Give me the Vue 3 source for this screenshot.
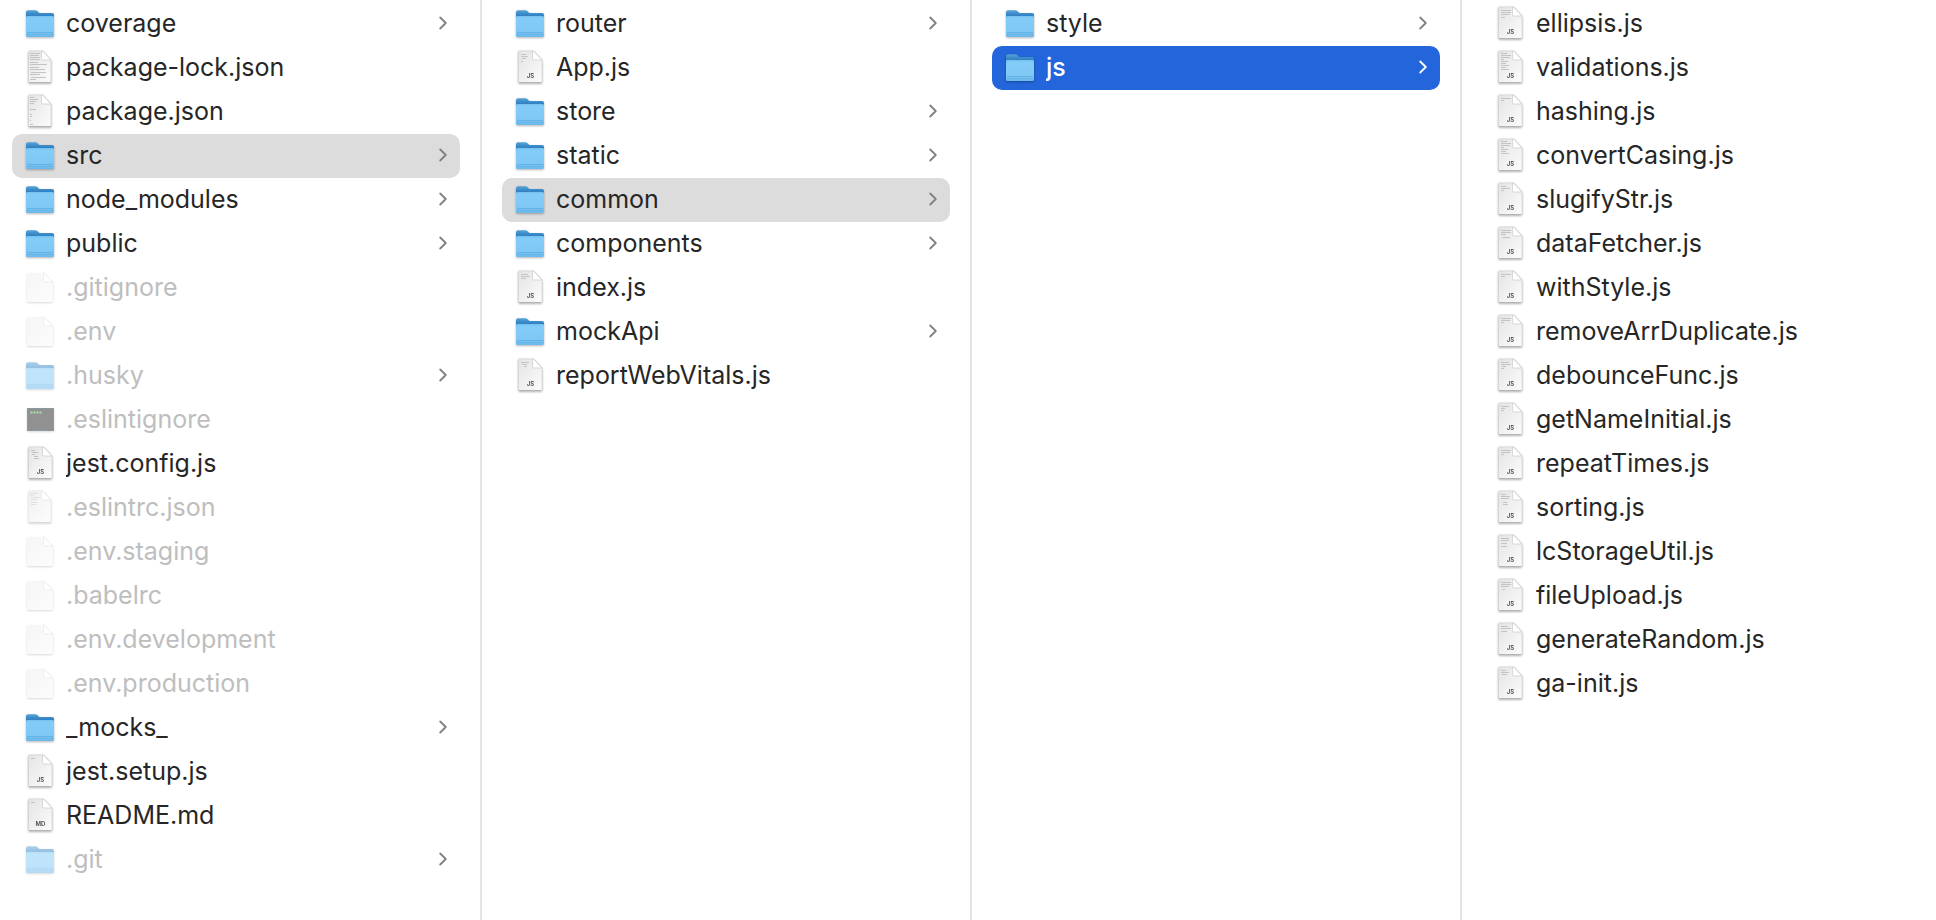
<script setup>
import { reactive } from 'vue'

const folder = (name, extra = {}) => ({ name, kind: 'folder', ...extra })
// lines: rows of preview text as [x, y, width]
const script = (name, lines = [], extra = {}) => ({ name, kind: 'doc', tag: 'JS', lines, ...extra })

const short = [[5, 4, 8], [5, 6, 4], [5, 8, 3]]
const wide = [[5, 4, 10], [5, 6, 9], [5, 8, 3]]
const dense = [[5, 3, 6], [5, 5, 10], [5, 7, 9], [5, 9, 3], [5, 11, 7], [5, 13, 5], [5, 15, 8]]
const tiny = [[5, 4, 4]]

const columns = reactive([
  {
    title: 'Project',
    selected: 'src',
    items: [
      folder('coverage'),
      {
        name: 'package-lock.json', kind: 'doc', narrow: true,
        lines: [[4, 3, 10], [4, 5, 9], [4, 7, 10], [4, 9, 10], [4, 12, 8], [4, 14, 17], [4, 17, 9], [4, 19, 15], [5, 22, 15], [4, 24, 10], [5, 27, 15], [4, 29, 6]]
      },
      {
        name: 'package.json', kind: 'doc', narrow: true,
        lines: [[4, 3, 4], [4, 5, 8], [4, 7, 6], [4, 9, 4], [4, 15, 6], [4, 20, 2], [4, 22, 2], [4, 26, 1], [4, 30, 3]]
      },
      folder('src'),
      folder('node_modules'),
      folder('public'),
      { name: '.gitignore', kind: 'blank', dim: true },
      { name: '.env', kind: 'blank', dim: true },
      folder('.husky', { dim: true }),
      { name: '.eslintignore', kind: 'terminal', dim: true },
      script('jest.config.js', [[5, 4, 4], [6, 6, 6], [6, 8, 3], [8, 10, 4], [8, 12, 5]]),
      {
        name: '.eslintrc.json', kind: 'doc', narrow: true, dim: true,
        lines: [[4, 3, 8], [4, 5, 3], [5, 7, 8], [5, 9, 6], [4, 12, 7], [5, 14, 5]]
      },
      { name: '.env.staging', kind: 'blank', dim: true },
      { name: '.babelrc', kind: 'blank', dim: true },
      { name: '.env.development', kind: 'blank', dim: true },
      { name: '.env.production', kind: 'blank', dim: true },
      folder('_mocks_'),
      script('jest.setup.js', tiny),
      { name: 'README.md', kind: 'doc', tag: 'MD', lines: tiny },
      folder('.git', { dim: true })
    ]
  },
  {
    title: 'src',
    selected: 'common',
    items: [
      folder('router'),
      script('App.js', [[5, 4, 5], [5, 6, 7], [6, 8, 4], [5, 11, 2]]),
      folder('store'),
      folder('static'),
      folder('common'),
      folder('components'),
      script('index.js', [[5, 4, 7], [5, 6, 9], [5, 8, 5]]),
      folder('mockApi'),
      script('reportWebVitals.js', [[5, 4, 8], [6, 6, 5], [8, 8, 3]])
    ]
  },
  {
    title: 'common',
    selected: 'js',
    active: true,
    items: [folder('style'), folder('js')]
  },
  {
    title: 'js',
    selected: '',
    items: [
      script('ellipsis.js', [[5, 4, 10], [5, 6, 10], [5, 8, 9], [5, 11, 4]]),
      script('validations.js', [...dense, [5, 17, 5], [5, 19, 8]]),
      script('hashing.js', [[5, 4, 10], [5, 6, 3]]),
      script('convertCasing.js', dense),
      script('slugifyStr.js', [[5, 4, 5], [5, 6, 9], [5, 8, 3]]),
      script('dataFetcher.js', [[5, 4, 10], [5, 6, 10], [5, 8, 5], [6, 11, 8]]),
      script('withStyle.js', [[5, 4, 10], [5, 6, 4]]),
      script('removeArrDuplicate.js', wide),
      script('debounceFunc.js', [[5, 4, 8], [5, 6, 10], [6, 8, 4], [5, 10, 3]]),
      script('getNameInitial.js', short),
      script('repeatTimes.js', wide),
      script('sorting.js', [[5, 4, 5], [5, 6, 9], [5, 8, 8], [7, 12, 4], [7, 14, 5]]),
      script('lcStorageUtil.js', [[5, 4, 8], [5, 6, 8], [5, 9, 6], [5, 12, 6]]),
      script('fileUpload.js', [[5, 4, 10], [5, 6, 10], [5, 8, 8], [6, 11, 3]]),
      script('generateRandom.js', [[5, 4, 7], [5, 6, 10], [5, 9, 6]]),
      script('ga-init.js', [[5, 4, 5], [5, 6, 8], [6, 8, 5]])
    ]
  }
])
</script>

<template>
  <svg class="defs" aria-hidden="true">
    <defs>
      <linearGradient id="folder-back" x1="0" y1="0" x2="0" y2="1">
        <stop offset="0" stop-color="#58a4d9" />
        <stop offset="0.3" stop-color="#4090cc" />
        <stop offset="0.6" stop-color="#2f7fc2" />
      </linearGradient>
      <linearGradient id="folder-front" x1="0" y1="0" x2="0" y2="1">
        <stop offset="0" stop-color="#72c1f0" />
        <stop offset="0.12" stop-color="#84ccf8" />
        <stop offset="0.72" stop-color="#7fc8f5" />
        <stop offset="1" stop-color="#6ab8ea" />
      </linearGradient>
      <linearGradient id="paper" x1="0" y1="0" x2="1" y2="1">
        <stop offset="0" stop-color="#e4e4e4" />
        <stop offset="1" stop-color="#fcfcfc" />
      </linearGradient>
      <linearGradient id="blank-paper" x1="0" y1="0" x2="1" y2="1">
        <stop offset="0" stop-color="#ededed" />
        <stop offset="1" stop-color="#fbfbfb" />
      </linearGradient>
    </defs>
  </svg>

  <main class="browser">
    <ul v-for="col in columns" :key="col.title" class="column" :aria-label="col.title">
      <li v-for="item in col.items" :key="item.name">
        <button
          type="button"
          class="row"
          :class="{ selected: item.name === col.selected, active: col.active, dim: item.dim }"
          @click="col.selected = item.name"
        >
          <svg class="icon" viewBox="0 -2 28 38" aria-hidden="true">
            <g v-if="item.kind === 'folder'">
              <path d="M0 6.2Q0 4.2 2 4.2H9.2Q10.6 4.2 11.6 5.2L12.8 6.4Q13.6 7 14.8 7H26.2Q28 7 28 8.8V14H0Z" fill="url(#folder-back)" />
              <path d="M0 11.4Q0 10 1.4 10H26.6Q28 10 28 11.4V29.4Q28 31 26.4 31H1.6Q0 31 0 29.4Z" fill="url(#folder-front)" />
              <path d="M1 26.5H27" stroke="#5fafe2" stroke-width="0.8" />
              <path d="M1 28.5H27" stroke="#5fafe2" stroke-width="0.6" />
            </g>
            <g v-else-if="item.kind === 'doc'">
              <path v-if="item.narrow" d="M3 1H16.5L25 10V31.5Q25 32.5 24 32.5H3.5Q2.5 32.5 2.5 31.5V1.5Z" fill="url(#paper)" stroke="#d2d2d2" stroke-width="0.7" />
              <path v-else d="M3 1H17.5L26 10V31.5Q26 32.5 25 32.5H3.5Q2.5 32.5 2.5 31.5V1.5Z" fill="url(#paper)" stroke="#d2d2d2" stroke-width="0.7" />
              <path :d="item.narrow ? 'M15.5 1V8.5Q15.5 10 17 10H25L16.5 1Z' : 'M16.5 1V8.5Q16.5 10 18 10H26L17.5 1Z'" fill="#fff" stroke="#c8c8c8" stroke-width="0.7" />
              <path d="M3 32.5H25" stroke="#b4b4b4" />
              <rect v-for="(l, i) in item.lines" :key="i" :x="l[0]" :y="l[1]" :width="l[2]" height="1" fill="#c4c4c4" />
              <text v-if="item.tag" x="14.4" y="28" class="tag">{{ item.tag }}</text>
            </g>
            <g v-else-if="item.kind === 'blank'">
              <path d="M2 3H17.5L27 12V30Q27 32 25.5 32H2.5Q1 32 1 30.5V4Q1 3 2 3Z" fill="url(#blank-paper)" />
              <path d="M17.5 3V10.5Q17.5 12 19 12H27Z" fill="#fff" stroke="#d0d0d0" stroke-width="0.6" />
            </g>
            <g v-else>
              <rect x="1" y="6" width="27" height="23" fill="#262626" />
              <rect x="1.5" y="6.5" width="26" height="22" fill="none" stroke="#0e3a3e" />
              <path d="M4.5 10.5H16" stroke="#57c255" stroke-width="2" stroke-dasharray="2 1" />
            </g>
          </svg>
          <span class="name">{{ item.name }}</span>
          <svg v-if="item.kind === 'folder'" class="chevron" viewBox="0 0 8 12" aria-hidden="true">
            <path d="M1.2 0.5L6.8 6L1.2 11.5" />
          </svg>
        </button>
      </li>
    </ul>
  </main>
</template>

<style>
body {
  background: #fff;
}
</style>

<style scoped>
.defs {
  position: absolute;
  width: 0;
  height: 0;
}

.browser {
  display: grid;
  grid-template-columns: minmax(0, 482fr) minmax(0, 490fr) minmax(0, 490fr) minmax(0, 474fr);
  min-height: 100vh;
  font-family: Inter, "Liberation Sans", sans-serif;
}

.column {
  box-sizing: border-box;
  margin: 0;
  padding: 2px 20px;
  list-style: none;
  border-right: 2px solid #e5e5e5;
}

.column:first-child {
  padding-left: 12px;
}

.column:last-child {
  border-right: 0;
}

.row {
  display: flex;
  align-items: center;
  gap: 12px;
  box-sizing: border-box;
  width: 100%;
  height: 44px;
  padding: 0 13px 2px 14px;
  border: 0;
  border-radius: 10px;
  background: transparent;
  color: #262626;
  font: inherit;
  font-size: 25px;
  line-height: 32px;
  text-align: left;
}

.selected {
  background: #dcdcdc;
}

.selected.active {
  background: #2365da;
  color: #fff;
  font-weight: 500;
}

.icon {
  flex: none;
  width: 28px;
  height: 38px;
  overflow: visible;
  filter: drop-shadow(0 1px 1px rgba(0, 0, 0, 0.3));
}

.dim .icon {
  opacity: 0.5;
}

.dim .name {
  color: #bebebe;
}

.name {
  flex: 1;
  min-width: 0;
  overflow: hidden;
  white-space: nowrap;
  text-overflow: ellipsis;
}

.tag {
  font-size: 6px;
  font-weight: 600;
  fill: #4a4a4a;
  text-anchor: middle;
}

.chevron {
  flex: none;
  width: 8px;
  height: 12px;
  overflow: visible;
  fill: none;
  stroke: #808080;
  stroke-width: 1.8;
  stroke-linecap: round;
  stroke-linejoin: round;
}

.selected.active .chevron {
  stroke: #fff;
}
</style>
